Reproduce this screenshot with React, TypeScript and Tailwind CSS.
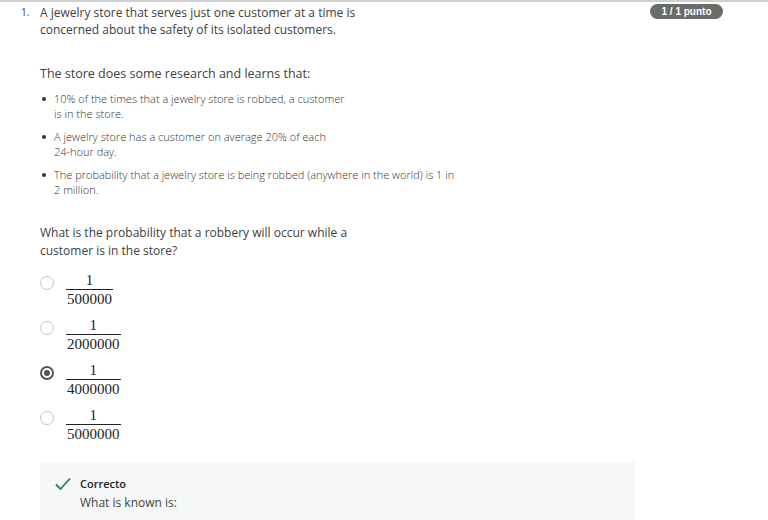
import React from "react";

const options = ["500000", "2000000", "4000000", "5000000"];

function Fraction({ den }: { den: string }) {
  return (
    <span className="inline-flex flex-col items-center text-[15px] leading-[18px] text-[#222]" style={{ fontFamily: '"Liberation Serif", "DejaVu Serif", serif' }}>
      <span className="px-[1px]">1</span>
      <span className="border-t border-[#222] px-[1px]">{den}</span>
    </span>
  );
}

export default function App() {
  return (
    <section className="w-[768px] h-[520px] overflow-hidden bg-white border-t-2 border-[#cfcfcf] text-[#404040]" style={{ fontFamily: '"Open Sans", sans-serif' }}>
      <div className="flex justify-between">
        <div className="flex pt-[2px]">
          <span className="w-[40px] pl-[21px] text-[10px] leading-[16px]">1.</span>
          <p className="text-[12px] leading-[17px] w-[330px]">
            A jewelry store that serves just one customer at a time is concerned about the safety of its isolated customers.
          </p>
        </div>
        <div className="pt-[2px] pr-[45px]">
          <span className="block w-[73px] text-center rounded-full bg-[#6b6b6b] text-white text-[10px] font-bold leading-[15px]" style={{ fontFamily: '"Liberation Sans", Arial, sans-serif' }}>
            1 / 1 punto
          </span>
        </div>
      </div>

      <div className="pl-[40px] pt-[27px]">
        <p className="text-[12.5px] leading-[18px]">The store does some research and learns that:</p>
        <ul className="mt-[8px] flex flex-col gap-[8px] text-[11px] leading-[15px] font-light text-[#333]">
          <li className="flex">
            <span className="w-[14px] pt-[6px] pl-[2px]"><span className="block w-[4px] h-[4px] rounded-full bg-[#333]" /></span>
            <span className="w-[295px]">10% of the times that a jewelry store is robbed, a customer is in the store.</span>
          </li>
          <li className="flex">
            <span className="w-[14px] pt-[6px] pl-[2px]"><span className="block w-[4px] h-[4px] rounded-full bg-[#333]" /></span>
            <span className="w-[280px]">A jewelry store has a customer on average 20% of each 24-hour day.</span>
          </li>
          <li className="flex">
            <span className="w-[14px] pt-[6px] pl-[2px]"><span className="block w-[4px] h-[4px] rounded-full bg-[#333]" /></span>
            <span className="w-[405px]">The probability that a jewelry store is being robbed (anywhere in the world) is 1 in 2 million.</span>
          </li>
        </ul>

        <p className="mt-[27px] text-[12px] leading-[18px] w-[320px]">
          What is the probability that a robbery will occur while a customer is in the store?
        </p>

        <div className="mt-[11px] flex flex-col gap-[8px]">
          {options.map((d, i) => (
            <label key={d} className="flex items-start gap-[12px]">
              {i === 2 ? (
                <span className="mt-[5px] w-[14px] h-[14px] rounded-full border-2 border-[#555] flex items-center justify-center">
                  <span className="w-[6px] h-[6px] rounded-full bg-[#555]" />
                </span>
              ) : (
                <span className="mt-[5px] w-[14px] h-[14px] rounded-full border-[1.5px] border-[#c4c4c4]" />
              )}
              <Fraction den={d} />
            </label>
          ))}
        </div>

        <div className="mt-[19px] w-[595px] h-[70px] bg-[#f5f8f7] pl-[15px] pt-[14px]">
          <div className="flex items-center gap-[9px]">
            <svg width="16" height="14" viewBox="0 0 16 14" fill="none">
              <path d="M1 7.5 L5.5 12 L15 1.5" stroke="#1f8354" strokeWidth="1.8" />
            </svg>
            <span className="text-[11px] leading-[16px] font-semibold text-[#1f1f1f]">Correcto</span>
          </div>
          <p className="pl-[25px] mt-[2px] text-[12px] leading-[18px] text-[#444]">What is known is:</p>
        </div>
      </div>
    </section>
  );
}
